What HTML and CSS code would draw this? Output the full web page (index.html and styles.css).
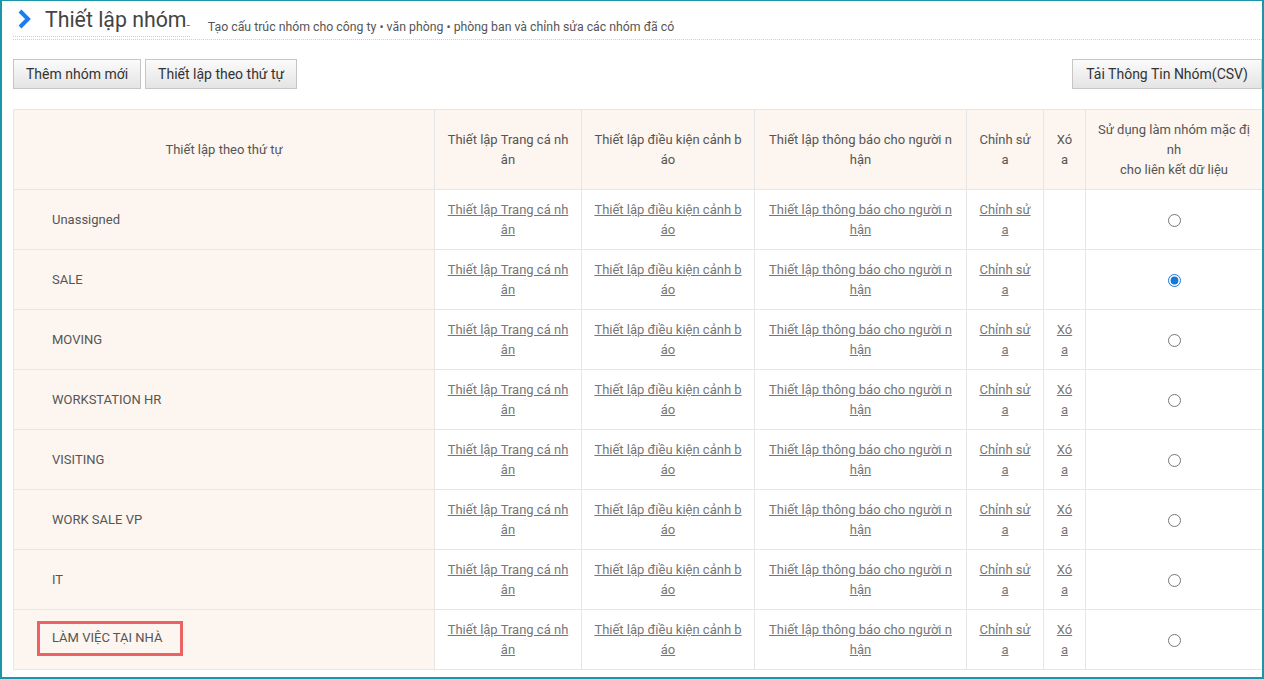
FILE: index.html
```html
<!DOCTYPE html>
<html lang="vi">
<head>
  <meta charset="UTF-8">
  <meta name="viewport" content="width=device-width, initial-scale=1.0">
  <link rel="stylesheet" href="styles.css">
  <title>Thiết lập nhóm</title>
</head>
<body>
  <div class="frame">
    <!-- tiêu đề trang -->
    <div class="page-head">
      <div class="head-main">
        <svg class="chevron" width="14" height="20" viewBox="0 0 14 20">
          <path d="M2 2 L10 10 L2 18" fill="none" stroke="#1a7ef2" stroke-width="4"/>
        </svg>
        <h1 class="title">Thiết lập nhóm</h1>
        <span class="dash">-</span>
      </div>
      <span class="subtitle">Tạo cấu trúc nhóm cho công ty • văn phòng • phòng ban và chỉnh sửa các nhóm đã có</span>
    </div>

    <div class="toolbar">
      <button class="btn">Thêm nhóm mới</button>
      <button class="btn">Thiết lập theo thứ tự</button>
      <button class="btn btn-right">Tải Thông Tin Nhóm(CSV)</button>
    </div>

    <table class="groups">
      <colgroup>
        <col style="width:421px">
        <col style="width:147px">
        <col style="width:173px">
        <col style="width:212px">
        <col style="width:77px">
        <col style="width:42px">
        <col style="width:177px">
      </colgroup>
      <thead>
        <tr>
          <th>Thiết lập theo thứ tự</th>
          <th>Thiết lập Trang cá nh<br>ân</th>
          <th>Thiết lập điều kiện cảnh b<br>áo</th>
          <th>Thiết lập thông báo cho người n<br>hận</th>
          <th>Chỉnh sử<br>a</th>
          <th>Xó<br>a</th>
          <th>Sử dụng làm nhóm mặc đị<br>nh<br>cho liên kết dữ liệu</th>
        </tr>
      </thead>
      <tbody id="rows"></tbody>
    </table>
  </div>

  <script>
    // danh sách nhóm
    const groups = [
      { name: 'Unassigned', del: false },
      { name: 'SALE', del: false, checked: true },
      { name: 'MOVING', del: true },
      { name: 'WORKSTATION HR', del: true },
      { name: 'VISITING', del: true },
      { name: 'WORK SALE VP', del: true },
      { name: 'IT', del: true },
      { name: 'LÀM VIỆC TẠI NHÀ', del: true, mark: true }
    ];

    const tbody = document.getElementById('rows');
    groups.forEach(function(g) {
      let tr = document.createElement('tr');
      let name = g.mark ? '<span class="marked">' + g.name + '</span>' : g.name;
      tr.innerHTML =
        '<td class="name">' + name + '</td>' +
        '<td><a href="#">Thiết lập Trang cá nh<br>ân</a></td>' +
        '<td><a href="#">Thiết lập điều kiện cảnh b<br>áo</a></td>' +
        '<td><a href="#">Thiết lập thông báo cho người n<br>hận</a></td>' +
        '<td><a href="#">Chỉnh sử<br>a</a></td>' +
        '<td>' + (g.del ? '<a href="#">Xó<br>a</a>' : '') + '</td>' +
        '<td><input type="radio" name="default"' + (g.checked ? ' checked' : '') + '></td>';
      tbody.appendChild(tr);
    });
  </script>
</body>
</html>
```

FILE: styles.css
```css
html, body {
  margin: 0;
  background: #fff;
}

body {
  font-family: Roboto, "Liberation Sans", sans-serif;
  color: #555;
}

.frame {
  width: 1264px;
  height: 679px;
  box-sizing: border-box;
  border: 2px solid #1a96a8;
  border-top-width: 1px;
  padding-left: 11px;
  overflow: hidden;
}

.page-head {
  display: flex;
  align-items: flex-end;
  height: 38px;
  border-bottom: 1px dotted #cfcfcf;
}

.head-main {
  display: flex;
  align-items: center;
  height: 33px;
  padding-top: 2px;
  border-bottom: 1px dotted #cfcfcf;
  margin-bottom: 2px;
}

.chevron {
  margin-left: 5px;
  margin-top: -2px;
}

.title {
  margin: 0 0 0 13px;
  font-size: 21.3px;
  font-weight: normal;
  color: #444;
  line-height: 30px;
}

.dash {
  font-size: 12px;
  margin-top: 10px;
  color: #666;
}

.subtitle {
  font-size: 12.3px;
  color: #555;
  margin-left: 18px;
  margin-bottom: 5px;
}

.toolbar {
  display: flex;
  gap: 4px;
  margin-top: 19px;
  width: 1249px;
}

.btn {
  height: 30px;
  padding: 0 12px;
  font-family: Roboto, "Liberation Sans", sans-serif;
  font-size: 14px;
  color: #333;
  border: 1px solid #c6c6c6;
  border-radius: 0;
  background: linear-gradient(#fbfbfb, #e4e4e4);
}

.btn-right {
  margin-left: auto;
  padding: 0 13px;
}

.groups {
  margin-top: 20px;
  width: 1249px;
  table-layout: fixed;
  border-collapse: collapse;
  font-size: 13px;
  line-height: 20px;
}

.groups th,
.groups td {
  border: 1px solid #e6e6e6;
  text-align: center;
  vertical-align: middle;
  white-space: nowrap;
  padding: 0;
  height: 59px;
}

.groups th {
  height: 79px;
  font-weight: normal;
  color: #555;
  background: #fdf5ef;
}

.groups td.name {
  text-align: left;
  padding-left: 38px;
  background: #fdf5ef;
  color: #555;
}

.groups a {
  color: #777;
  text-decoration: underline;
}

.groups input[type="radio"] {
  margin: 0;
  width: 13px;
  height: 13px;
  accent-color: #1976d2;
  vertical-align: middle;
}

.marked {
  display: inline-block;
  margin: -3px 0 0 -15px;
  padding: 4px 18px 5px 12px;
  border: 3px solid #ec6262;
}
```
